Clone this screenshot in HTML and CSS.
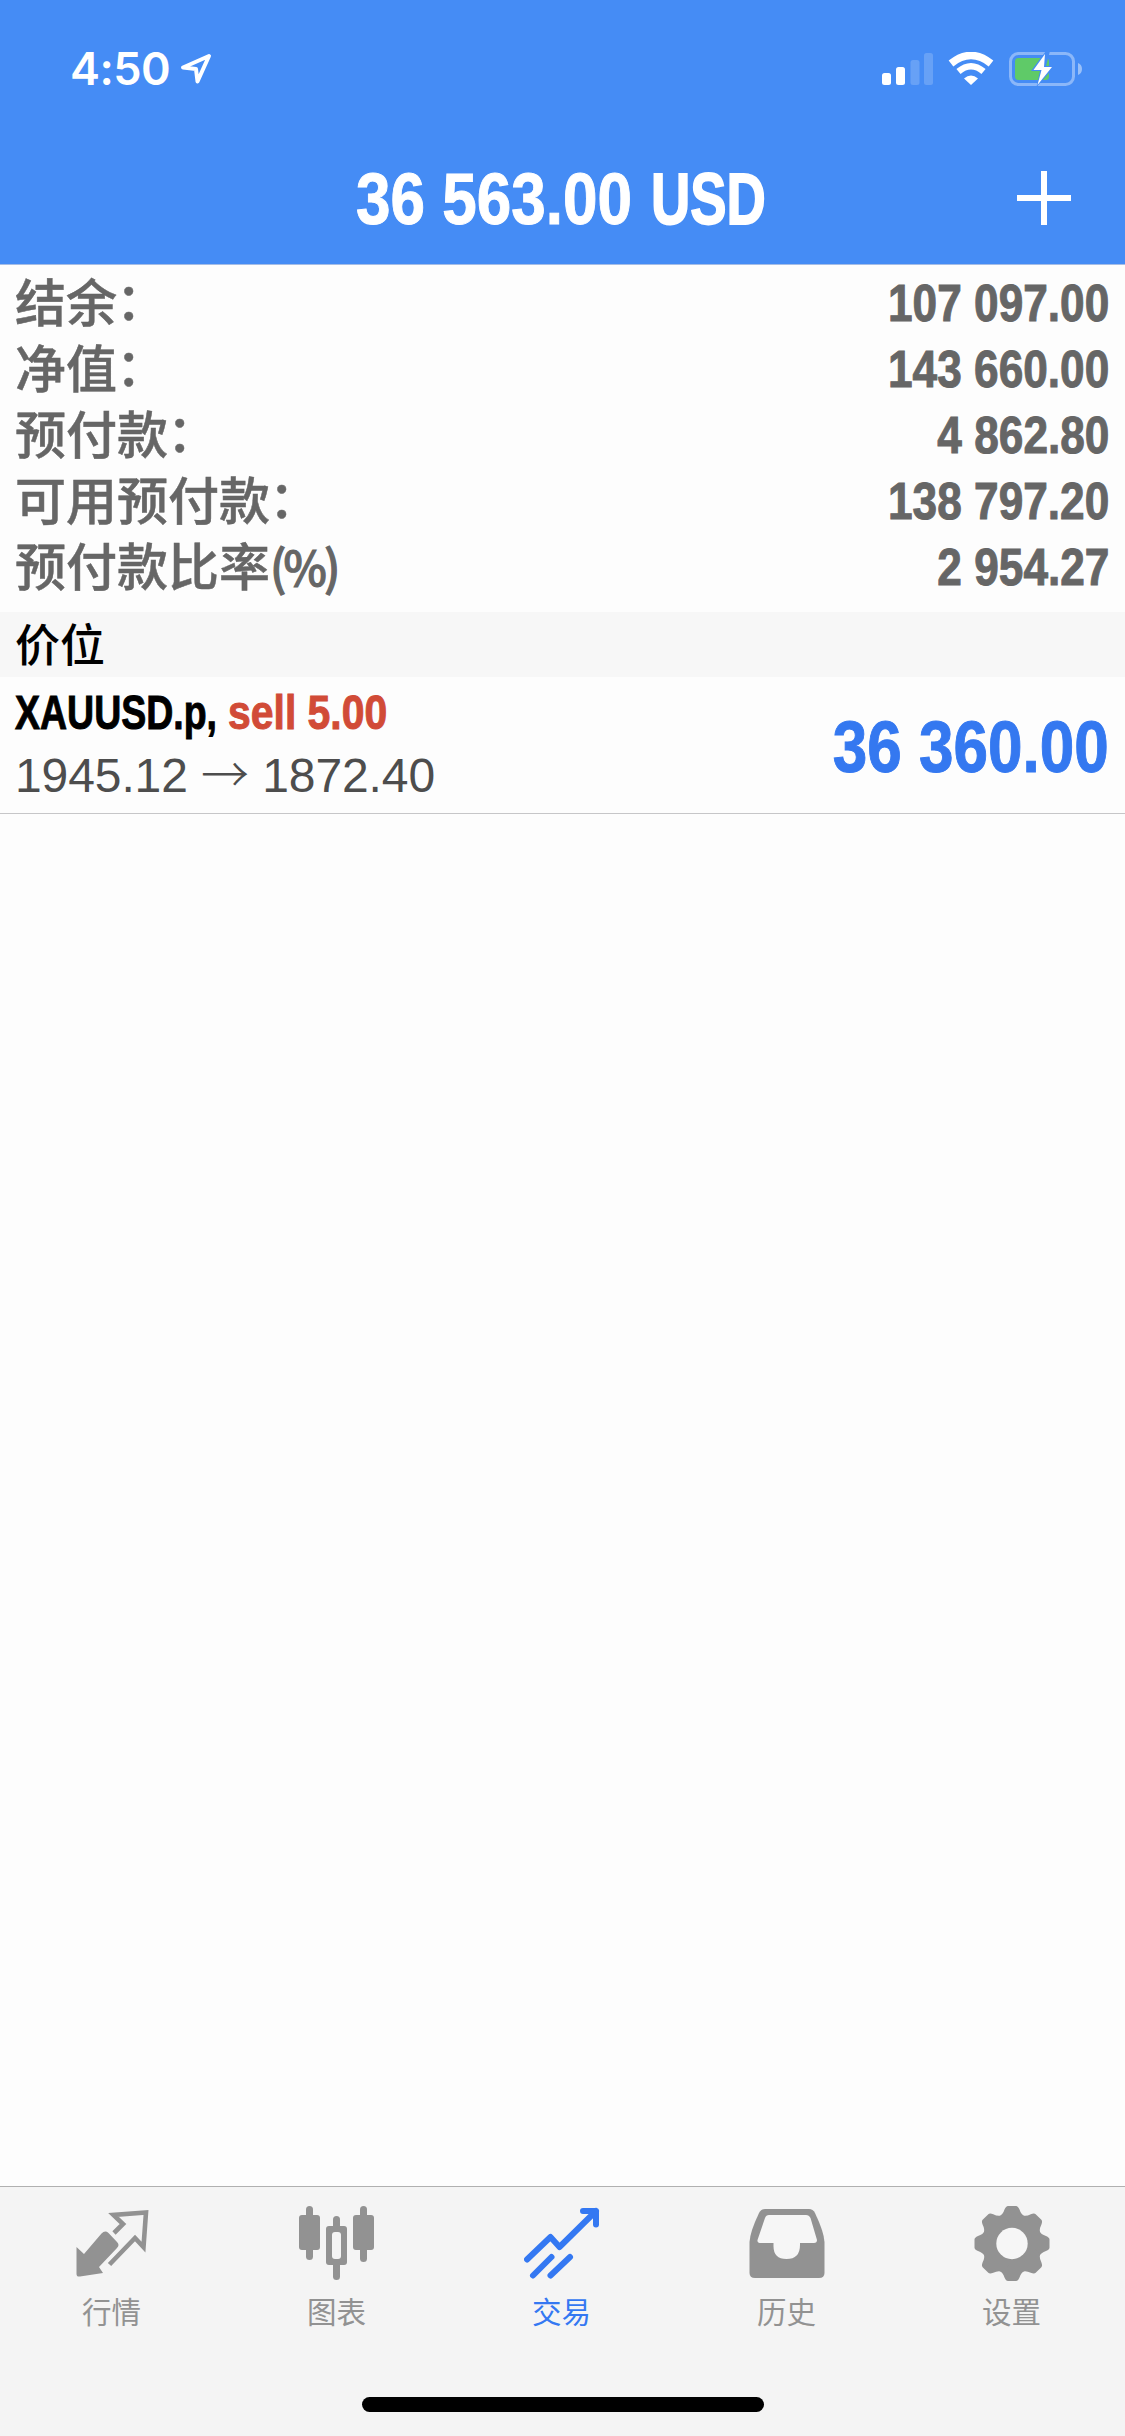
FILE: index.html
```html
<!DOCTYPE html>
<html lang="zh-CN">
<head>
<meta charset="utf-8">
<title>交易</title>
<link rel="stylesheet" href="styles.css">
</head>
<body>
<div class="app">
  <header class="header">
    <div class="status">
      <span class="time">4:50</span>
      <svg class="location" width="32" height="32" viewBox="0 0 32 32"><path d="M29 3 3 14.500l13 1.500 1.500 12.500z" fill="none" stroke="#fff" stroke-width="4" stroke-linejoin="round"/></svg>
      <div class="status-icons">
        <svg width="51" height="34" viewBox="0 0 51 34" fill="#fff"><rect y="21" width="9" height="12" rx="2.500"/><rect x="14" y="15" width="9" height="18" rx="2.500"/><g opacity=".18"><rect x="28.500" y="8" width="9" height="25" rx="2.500"/><rect x="42" y="1" width="9" height="32" rx="2.500"/></g></svg>
        <svg class="wifi" width="46" height="34" viewBox="0 0 46 34" fill="none" stroke="#fff"><path d="M3 11.500Q23-4.500 43 11.500" stroke-width="7.500"/><path d="M10.500 19.500Q23 9 35.500 19.500" stroke-width="6.500"/><path d="M16 26.500Q23 20.500 30 26.500L23 33z" fill="#fff" stroke="none"/></svg>
        <svg class="battery" width="74" height="36" viewBox="0 0 74 36"><rect x="1.500" y="2.500" width="63" height="31" rx="8" fill="none" stroke="#fff" stroke-opacity=".38" stroke-width="3"/><path d="M69 12q4 1.500 4 6t-4 6z" fill="#fff" opacity=".45"/><rect x="6" y="7" width="34" height="22" rx="3.500" fill="#5fca68"/><path d="M37 0 22 20h9l-3.500 16L46 15h-9L41 0z" fill="#458cf5"/><path d="M36 3 24.500 19h8l-4 15L43 16h-8z" fill="#fff"/></svg>
      </div>
    </div>
    <div class="nav">
      <h1 class="total"><span class="condensed total-sum">36 563.00</span><span class="condensed total-currency">USD</span></h1>
      <svg class="add" width="54" height="54" viewBox="0 0 54 54"><path d="M27 0v54M0 27h54" stroke="#fff" stroke-width="6"/></svg>
    </div>
  </header>

  <main class="content">
    <dl class="account">
      <div class="row"><dt>结余<span class="colon">：</span></dt><dd class="condensed">107 097.00</dd></div>
      <div class="row"><dt>净值<span class="colon">：</span></dt><dd class="condensed">143 660.00</dd></div>
      <div class="row"><dt>预付款<span class="colon">：</span></dt><dd class="condensed">4 862.80</dd></div>
      <div class="row"><dt>可用预付款<span class="colon">：</span></dt><dd class="condensed">138 797.20</dd></div>
      <div class="row"><dt>预付款比率<span class="unit">(%)</span></dt><dd class="condensed">2 954.27</dd></div>
    </dl>
    <h2 class="section">价位</h2>
    <div class="position">
      <div class="details">
        <div class="deal"><span class="condensed symbol">XAUUSD.p,</span><span class="condensed side">sell 5.00</span></div>
        <div class="prices">1945.12 <span class="arrow">→</span> 1872.40</div>
      </div>
      <div class="condensed profit">36 360.00</div>
    </div>
  </main>

  <nav class="tabs">
    <div class="tab">
      <svg width="76" height="78" viewBox="0 0 76 78"><path d="M2.500 43 10 50 27.500 29.500Q31 26 34.500 29L43 38Q46 41 43 44L25 63l4 6-23 3.500Q2.500 73 2.500 70z" fill="#929292"/><path d="m40 29 9-9-9.500-9L72 8.500 69.500 43 61 34 35.500 60.500" fill="none" stroke="#929292" stroke-width="4.600"/></svg>
      <span>行情</span>
    </div>
    <div class="tab">
      <svg width="76" height="78" viewBox="0 0 76 78" fill="#929292"><rect x="7" y="2" width="7" height="54" rx="3.500"/><rect y="11" width="21" height="35" rx="3"/><rect x="61" y="2" width="7" height="56" rx="3.500"/><rect x="54" y="11" width="21" height="35" rx="3"/><rect x="34" y="12" width="7" height="64" rx="3.500"/><rect x="27" y="22" width="21" height="39" rx="3"/><rect x="33" y="28" width="9" height="27" rx="3" fill="#f4f4f4"/></svg>
      <span>图表</span>
    </div>
    <div class="tab active">
      <svg width="76" height="78" viewBox="0 0 76 78" fill="none" stroke="#3478f2" stroke-width="6" stroke-linecap="round" stroke-linejoin="round"><path d="M3 55.500 26.500 33l9 10L71 8M59 7h13v13.500M72 7l-5 5"/><path d="M9 71.500 27.500 53M26.500 71.500 46 53"/></svg>
      <span>交易</span>
    </div>
    <div class="tab">
      <svg width="76" height="78" viewBox="0 0 76 78"><path d="M16 5H60Q64 5 66 9 75 28 75.500 38V69Q75.500 74 70 74H6Q.5 74 .5 69V38Q1 28 10 9 12 5 16 5z" fill="#929292"/><path d="M20 11H57Q60 11 61.500 14L68 36Q68 39 65 39H51v2q0 14-13.500 14T24.500 41V39H12q-4 0-3.500-3L16 14q1-3 4-3z" fill="#f6f6f6"/></svg>
      <span>历史</span>
    </div>
    <div class="tab">
      <svg width="76" height="78" viewBox="0 0 76 78"><g transform="translate(38 39.500)" fill="#929292"><circle r="29.500"/><g id="teeth"><path id="tooth" d="M-13-27Q-9-29-7.500-34-6-37.500-4-37.500H4Q6-37.500 7.500-34 9-29 13-27V-18H-13z"/><use href="#tooth" transform="rotate(45)"/><use href="#tooth" transform="rotate(90)"/><use href="#tooth" transform="rotate(135)"/></g><use href="#teeth" transform="rotate(180)"/><circle r="15.700" fill="#f6f6f6"/></g></svg>
      <span>设置</span>
    </div>
  </nav>
  <footer class="home"><div class="home-bar"></div></footer>
</div>
</body>
</html>
```
FILE: styles.css
```css
* { box-sizing: border-box; }
body, h1, h2, dl, dt, dd { margin: 0; padding: 0; font-weight: inherit; font-size: inherit; }
svg { display: block; flex: none; }

.app {
  width: 1125px;
  height: 2436px;
  display: flex;
  flex-direction: column;
  background: #fdfdfd;
  font-family: "Liberation Sans", "Noto Sans CJK SC", sans-serif;
}

/* Liberation Sans squeezed to a condensed bold cut */
.condensed {
  display: block;
  font-weight: 700;
  white-space: nowrap;
  transform: scaleX(.85);
  transform-origin: left center;
  -webkit-text-stroke: 1px currentColor;
}

.header {
  height: 265px;
  background: #458cf5;
  border-bottom: 1px solid #a5bde6;
  color: #fff;
}
.status {
  height: 132px;
  padding: 39px 42px 33px 70px;
  display: flex;
  align-items: center;
}
.time { font: 600 45px/60px Inter, sans-serif; width: 110px; letter-spacing: -.5px; }
.status-icons { margin-left: auto; display: flex; align-items: center; }
.wifi { margin-left: 15px; }
.battery { margin-left: 15px; }
.nav {
  height: 132px;
  padding: 0 54px 0 356px;
  display: flex;
  align-items: center;
  justify-content: space-between;
}
.total { display: flex; font-size: 73px; line-height: 133px; }
.total-sum { width: 295px; }
.total-currency { width: 115px; transform: scaleX(.745); -webkit-text-stroke-width: 1.8px; }

.account { padding: 5px 16px 0 15px; height: 347px; color: #666; }
.row { height: 66px; display: flex; justify-content: space-between; }
.row dt {
  padding-top: 3px;
  font-size: 51px;
  font-weight: 500;
  line-height: 64px;
  white-space: nowrap;
  -webkit-text-stroke: .5px currentColor;
}
.row dd { font-size: 52px; line-height: 66px; transform-origin: right center; }
.colon { display: inline-block; line-height: 1; transform: translate(-1px, -2px); }
.unit {
  display: inline-block;
  font-family: "Noto Sans CJK SC", sans-serif;
  font-size: 48px;
  line-height: 1;
  letter-spacing: -3px;
  transform: scaleX(.96);
  transform-origin: left center;
  -webkit-text-stroke-width: 1.2px;
}

.section {
  height: 65px;
  padding-left: 15px;
  background: #f7f7f7;
  color: #000;
  font: 500 45px/61px "Noto Sans CJK SC", sans-serif;
}

.position {
  height: 137px;
  padding: 0 16px 0 15px;
  border-bottom: 1px solid #c6c6c8;
  display: flex;
  justify-content: space-between;
}
.deal { display: flex; font-size: 49px; line-height: 70px; color: #000; }
.symbol { width: 213px; transform: scaleX(.765); }
.side { width: 160px; color: #d14b37; transform: scaleX(.835); }
.prices { font-size: 48px; line-height: 58px; color: #4d4d4d; white-space: pre; letter-spacing: -.1px; }
.arrow { font-family: "Noto Sans CJK SC", sans-serif; font-weight: 300; line-height: 1; }
.profit { font-size: 73px; line-height: 139px; color: #3478f0; transform-origin: right center; }

.tabs {
  margin-top: auto;
  height: 160px;
  padding-top: 17px;
  border-top: 1px solid #b0b0b0;
  background: #f4f4f4;
  display: grid;
  grid-template-columns: repeat(5, 1fr);
}
.tab {
  display: flex;
  flex-direction: column;
  align-items: center;
  padding-right: 2px;
  color: #929292;
  font: 400 29.5px/44px "Noto Sans CJK SC", sans-serif;
}
.tab span { margin-top: 6px; }
.tab.active { color: #3478f2; }

.home { height: 90px; padding-top: 51px; background: #f4f4f4; }
.home-bar { width: 402px; height: 15px; margin: 0 auto; border-radius: 8px; background: #000; }
```
